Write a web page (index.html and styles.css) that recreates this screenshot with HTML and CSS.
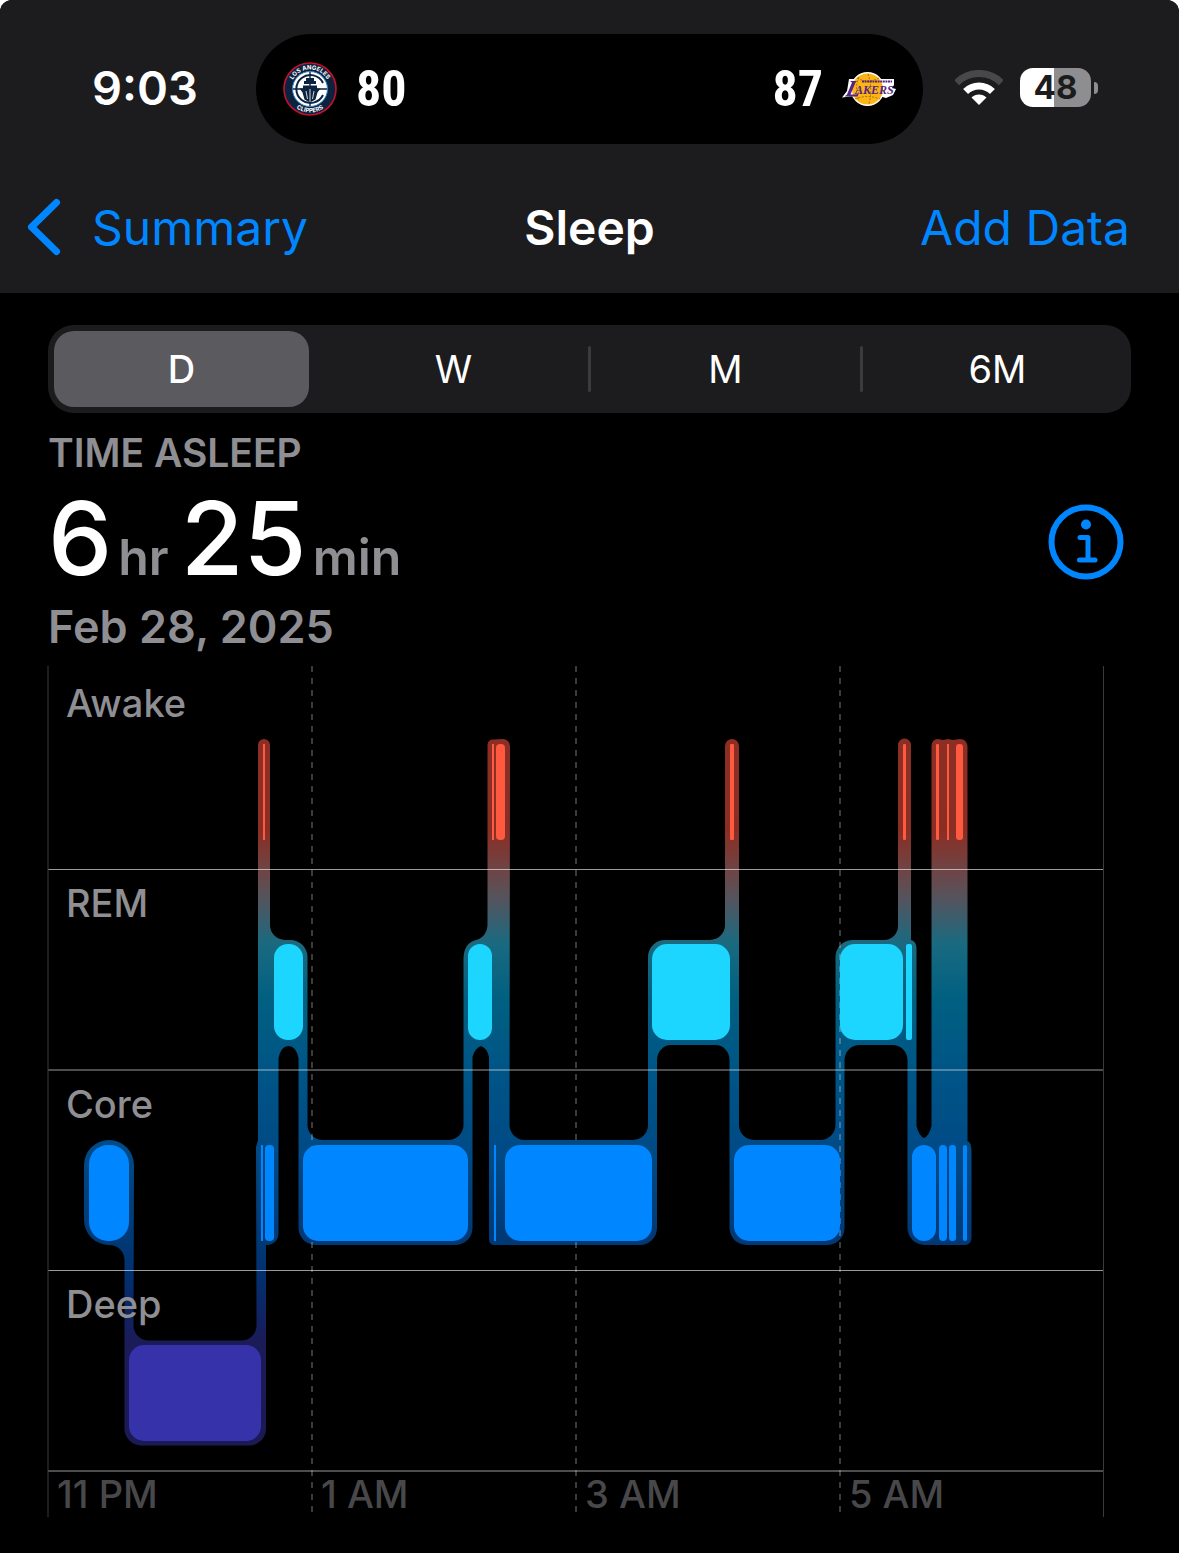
FILE: index.html
```html
<!DOCTYPE html>
<html lang="en">
<head>
  <meta charset="UTF-8" />
  <title>Sleep</title>
  <meta name="viewport" content="width=device-width, initial-scale=1.0" />
  <link rel="stylesheet" href="styles.css">
</head>
<body>
<div class="screen">
  <header class="top">
    <div class="status">
      <time class="clock">9:03</time>

      <!-- live score -->
      <div class="island">
        <svg class="logo" viewBox="0 0 54 54" role="img" aria-label="Los Angeles Clippers">
          <defs>
            <path id="arcTop" d="M7.500 27 A19.500 19.500 0 0 1 46.500 27" />
            <path id="arcBottom" d="M3.500 27 A23.500 23.500 0 0 0 50.500 27" />
          </defs>
          <circle cx="27" cy="27" r="26" fill="#0c2340" stroke="#c8102e" stroke-width="1.6" />
          <circle cx="27" cy="27" r="17.500" fill="#fff" stroke="#2f80c4" stroke-width="1" />
          <path d="M40 21 A14 14 0 1 0 40 33" fill="none" stroke="#0c2340" stroke-width="2" />
          <path d="M10 27 H44 M27 10 V44" stroke="#0c2340" stroke-width="1.4" />
          <path d="M23 16 h8 v3 h2 v3 h-12 v-3 h2z M20 23.500 h14 v3 h3.500 l-3 4 -2 7 -5.500 3 -5.500 -3 -2 -7 -3 -4 h3.500z" fill="#0c2340" />
          <path d="M27 27 V40 M23 29 l1.500 8 M31 29 l-1.500 8" stroke="#fff" stroke-width="0.8" />
          <text class="logo-ring"><textPath href="#arcTop" startOffset="50%">LOS ANGELES</textPath></text>
          <text class="logo-ring"><textPath href="#arcBottom" startOffset="50%">CLIPPERS</textPath></text>
        </svg>
        <span class="score">80</span>
        <span class="score score-away">87</span>
        <svg class="logo" viewBox="0 0 54 36" role="img" aria-label="Los Angeles Lakers">
          <circle cx="25.500" cy="18" r="17" fill="#fff" />
          <path d="M7 8 H52 V14 L50 17 L54 18 L51 24 L44 27 L37 25 H12 L0 26.500 L5 20z" fill="#fff" />
          <circle cx="25.500" cy="18" r="15.500" fill="#fdb515" />
          <path d="M15 7 Q25 13 37 7 M13 28 Q25 23 38 28 M26 3 Q31 17 27 33 M17 6 Q12 18 17 30" fill="none" stroke="#8a5a10" stroke-width="0.8" stroke-dasharray="2 1.500" />
          <path d="M20 10.500 H50" stroke="#552583" stroke-width="2" stroke-dasharray="2 0.600" />
          <path d="M8 10 h7 l-1.500 1.500 -5 12 h6 l3 -3 -2 5 H2.500 l2.500 -2 5 -12z" fill="#552583" />
          <text class="logo-word" x="13" y="23">AKERS</text>
        </svg>
      </div>

      <div class="indicators">
        <svg class="wifi" viewBox="0 0 48 36" role="img" aria-label="Wi-Fi">
          <path d="M1.700 12.700 A31.500 31.500 0 0 1 46.300 12.700" fill="none" stroke="#48484a" stroke-width="7" />
          <path d="M10.600 21.600 A19 19 0 0 1 37.400 21.600" fill="none" stroke="#fff" stroke-width="7" />
          <path d="M16.500 27.500 A10.600 10.600 0 0 1 31.500 27.500 L24 35z" fill="#fff" />
        </svg>
        <span class="battery">48</span>
        <i class="nub"></i>
      </div>
    </div>

    <nav class="nav">
      <a class="back" href="#">
        <svg class="chevron" viewBox="0 0 34 58" aria-hidden="true"><path d="M29.500 4.500 L4.500 29 L29.500 53.500" /></svg>
        Summary
      </a>
      <h1>Sleep</h1>
      <a class="add" href="#">Add Data</a>
    </nav>
  </header>

  <main>
    <div class="range">
      <button class="active">D</button>
      <button>W</button>
      <button>M</button>
      <button>6M</button>
    </div>

    <section class="summary">
      <div>
        <h2>TIME ASLEEP</h2>
        <p class="total"><b>6</b><span>hr</span><b>25</b><span>min</span></p>
        <p class="date">Feb 28, 2025</p>
      </div>
      <button class="info" aria-label="About sleep">
        <svg viewBox="0 0 76 76" aria-hidden="true">
          <circle cx="38" cy="38" r="34.500" fill="none" stroke="#0086ff" stroke-width="6" />
          <circle cx="38" cy="20.500" r="5" fill="#0086ff" />
          <path d="M32 33.500 H40 V56 M31.500 56 H47" />
        </svg>
      </button>
    </section>

    <svg class="chart" viewBox="47 665 1058 852" role="img" aria-label="Sleep stages, 11 PM to 6 AM">
      <defs>
        <linearGradient id="stages" gradientUnits="userSpaceOnUse" x1="0" y1="740" x2="0" y2="1440">
          <stop offset="0" stop-color="#8c2e23" />
          <stop offset="0.130" stop-color="#8a2e24" />
          <stop offset="0.190" stop-color="#6c4648" />
          <stop offset="0.230" stop-color="#51555f" />
          <stop offset="0.290" stop-color="#1a6a80" />
          <stop offset="0.370" stop-color="#006081" />
          <stop offset="0.470" stop-color="#005586" />
          <stop offset="0.590" stop-color="#004a86" />
          <stop offset="0.720" stop-color="#003874" />
          <stop offset="0.780" stop-color="#052c6c" />
          <stop offset="0.860" stop-color="#1b1b58" />
          <stop offset="1" stop-color="#1c1a55" />
        </linearGradient>
      </defs>

      <!-- connector running through all the stages -->
      <path fill="url(#stages)" d="M84 1165 A25 25 0 0 1 134 1165 L133.500 1325 A15 15 0 0 0 149 1340.500
        H241 A15 15 0 0 0 256.500 1325 L256 1147 L258 1140 V745 A6 6 0 0 1 270 745 V925 A15 15 0 0 0 285 940
        H290 A17 17 0 0 1 307.500 957 V1125 A15 15 0 0 0 323 1140
        H448 A15 15 0 0 0 463.500 1125 V958 Q464 943 476 940 A15 15 0 0 0 487.500 925
        V745 Q488 739 494 739.500 L503 739 A7 7 0 0 1 510 746 L509.500 1125 A15 15 0 0 0 525 1140
        H633 A15 15 0 0 0 648 1125 V957 A17 17 0 0 1 665 940 H710 A15 15 0 0 0 725 925
        V746 A7 7 0 0 1 739 746 V1125 A15 15 0 0 0 754 1140
        H820 A15 15 0 0 0 835.500 1125 V957 A17 17 0 0 1 852 940 H884 A14 14 0 0 0 898 926
        V745 A6.500 6.500 0 0 1 911 745 V940 Q916 941 916.500 948 V1126 Q919 1136 924 1138 Q929 1136 931.500 1126
        V746 Q932 739 938 739 L943 740 L948 739 L953 740 L960 739 Q967 739 967.500 747
        V1141 Q971 1142 971.500 1150 V1238 Q971 1245 965 1245
        H925 A17 17 0 0 1 907.500 1228 V1060 A15 15 0 0 0 892 1045 H860 A15 15 0 0 0 844.500 1060
        V1228 A17 17 0 0 1 828 1245 H747 A17 17 0 0 1 729.500 1228 V1060 A14 15 0 0 0 715 1045
        H671 A14 15 0 0 0 657 1060 V1228 A17 17 0 0 1 640 1245 H495 Q489 1245 489 1239
        V1057 Q487 1048 481 1046 Q475 1048 472.500 1057 V1228 A17 17 0 0 1 456 1245
        H316 A17 17 0 0 1 298.500 1228 V1058 Q296 1046 288.500 1046 Q281 1046 278.500 1058
        V1234 A11 11 0 0 1 268 1245 H266 V1428 A17 17 0 0 1 249 1445.500
        H142 A17 17 0 0 1 124.500 1428 V1260 A15 15 0 0 0 109 1245 A25 25 0 0 1 84 1220z" />

      <g class="hours">
        <path d="M312 666 V1517 M576 666 V1517 M840 666 V1517" stroke-dasharray="6 6" />
      </g>

      <g class="awake">
        <rect x="263" y="744" width="2" height="96" />
        <rect x="492" y="744" width="2" height="96" />
        <rect x="496" y="744" width="9" height="96" rx="4" />
        <rect x="730" y="744" width="4" height="96" rx="1" />
        <rect x="903" y="744" width="3" height="96" rx="1" />
        <rect x="936" y="744" width="3" height="96" rx="1" />
        <rect x="947" y="744" width="2" height="96" />
        <rect x="956" y="744" width="7" height="96" rx="3" />
      </g>
      <g class="rem">
        <rect x="274" y="944" width="29" height="96" rx="14" />
        <rect x="468" y="944" width="24" height="96" rx="12" />
        <rect x="652" y="944" width="78" height="96" rx="15" />
        <rect x="840" y="944" width="63" height="96" rx="15" />
        <rect x="906" y="944" width="6" height="96" rx="2" />
      </g>
      <g class="core">
        <rect x="89" y="1145" width="40" height="96" rx="19" />
        <rect x="261" y="1145" width="2" height="96" />
        <rect x="265" y="1145" width="9" height="96" rx="4" />
        <rect x="303" y="1145" width="165" height="96" rx="15" />
        <rect x="494" y="1145" width="2" height="96" />
        <rect x="505" y="1145" width="147" height="96" rx="15" />
        <rect x="734" y="1145" width="106" height="96" rx="15" />
        <rect x="912" y="1145" width="24" height="96" rx="12" />
        <rect x="939" y="1145" width="8" height="96" rx="4" />
        <rect x="949" y="1145" width="7" height="96" rx="3" />
        <rect x="963" y="1145" width="4" height="96" rx="2" />
      </g>
      <g class="deep">
        <rect x="129" y="1345" width="132" height="96" rx="15" />
      </g>

      <g class="lines">
        <path d="M48 869.500 H1104 M48 1270.500 H1104" />
        <path class="soft" d="M48 1070 H1104 M48 1471 H1104" />
        <path class="edge" d="M48 666 V1517 M1103.500 666 V1517" />
      </g>

      <g class="stage-names">
        <text x="66" y="717">Awake</text>
        <text x="66" y="917">REM</text>
        <text x="66" y="1118">Core</text>
        <text x="66" y="1318">Deep</text>
      </g>
      <g class="hour-names">
        <text x="57" y="1508">11 PM</text>
        <text x="321" y="1508">1 AM</text>
        <text x="585" y="1508">3 AM</text>
        <text x="849" y="1508">5 AM</text>
      </g>
    </svg>
  </main>
</div>
</body>
</html>
```

FILE: styles.css
```css
* {
  box-sizing: border-box;
}
body {
  margin: 0;
  background: #fff;
  font-family: Inter, "Liberation Sans", sans-serif;
}
h1, h2, p {
  margin: 0;
}
a {
  color: #0086ff;
  text-decoration: none;
}
button {
  border: none;
  background: none;
  padding: 0;
  color: #fff;
  font-family: inherit;
  cursor: pointer;
}
.screen {
  min-height: 100vh;
  background: #000;
  color: #fff;
  border-radius: 12px 12px 0 0;
  overflow: hidden;
}

/* status bar */
.top {
  background: #1c1c1e;
  padding-top: 34px;
}
.status {
  display: grid;
  grid-template-columns: 1fr 667px 1fr;
  align-items: center;
}
.clock {
  padding: 0 0 3px 92px;
  font-size: 47px;
  font-weight: 600;
}
.island {
  display: flex;
  align-items: center;
  gap: 19px;
  height: 110px;
  padding: 0 27px;
  background: #000;
  border-radius: 55px;
}
.logo {
  width: 54px;
}
.logo-ring {
  fill: #fff;
  font-size: 6px;
  font-weight: 700;
  text-anchor: middle;
}
.logo-word {
  fill: #552583;
  font-family: "Liberation Serif", serif;
  font-size: 12px;
  font-weight: 700;
  font-style: italic;
}
.score {
  font-family: "Liberation Sans Narrow", "Roboto Condensed", Roboto, sans-serif;
  font-size: 50px;
  font-weight: 700;
}
.score-away {
  margin-left: auto;
}
.indicators {
  display: flex;
  align-items: center;
  padding: 0 0 3px 32px;
}
.wifi {
  width: 48px;
}
.battery {
  width: 71px;
  margin-left: 17px;
  border-radius: 13px;
  background: linear-gradient(90deg, #fff 34px, #8e8e90 34px);
  color: #1c1c1e;
  font-size: 33px;
  font-weight: 700;
  line-height: 39px;
  text-align: center;
}
.nub {
  width: 4px;
  height: 12px;
  margin-left: 3px;
  border-radius: 0 4px 4px 0;
  background: #8e8e90;
}

/* title bar */
.nav {
  display: grid;
  grid-template-columns: 1fr auto 1fr;
  align-items: center;
  height: 132px;
  margin-top: 17px;
  padding: 0 27px;
  font-size: 48px;
}
.nav h1 {
  font-size: 48px;
  font-weight: 600;
}
.back {
  display: flex;
  align-items: center;
  gap: 31px;
}
.chevron {
  width: 34px;
}
.chevron path {
  fill: none;
  stroke: #0086ff;
  stroke-width: 7;
  stroke-linecap: round;
  stroke-linejoin: round;
}
.add {
  padding-right: 22px;
  text-align: right;
}

main {
  padding: 32px 48px 36px;
}

/* D / W / M / 6M */
.range {
  display: grid;
  grid-template-columns: repeat(4, 1fr);
  gap: 17px;
  padding: 6px;
  background: #1c1c1e;
  border-radius: 26px;
}
.range button {
  position: relative;
  height: 76px;
  border-radius: 20px;
  font-size: 38px;
  font-weight: 400;
}
.range .active {
  background: #5b5a5f;
  font-weight: 500;
}
.range button:nth-child(n+3)::before {
  content: "";
  position: absolute;
  left: -10px;
  top: 15px;
  width: 3px;
  height: 46px;
  border-radius: 2px;
  background: #3b3b3e;
}

.summary {
  display: flex;
  justify-content: space-between;
  align-items: center;
  margin-top: 16px;
  color: #8e8e93;
  font-weight: 600;
}
.summary h2 {
  font-size: 39px;
  font-weight: 600;
  line-height: 48px;
}
.total {
  display: flex;
  align-items: baseline;
  gap: 6px;
  margin: 13px 0;
  font-size: 50px;
  line-height: 52px;
}
.total b {
  color: #fff;
  font-size: 102px;
  font-weight: 500;
  line-height: 96px;
}
.total span {
  margin-right: 6px;
}
.date {
  font-size: 45px;
  line-height: 55px;
}
.info {
  width: 76px;
  height: 76px;
  margin-right: 7px;
}
.info path {
  fill: none;
  stroke: #0086ff;
  stroke-width: 5;
  stroke-linecap: round;
  stroke-linejoin: round;
}

/* chart */
.chart {
  display: block;
  width: calc(100% - 25px);
  margin: 11px 0 0 -1px;
}
.hours path {
  fill: none;
  stroke: rgba(255, 255, 255, 0.23);
  stroke-width: 2;
}
.awake {
  fill: #ff5940;
}
.rem {
  fill: #1cd6ff;
}
.core {
  fill: #0086ff;
}
.deep {
  fill: #3633aa;
}
.lines path {
  stroke: rgba(255, 255, 255, 0.6);
  stroke-width: 1;
}
.lines .soft {
  stroke: rgba(255, 255, 255, 0.3);
  stroke-width: 2;
}
.lines .edge {
  stroke: #3a3a3c;
}
.chart text {
  font-size: 38px;
  font-weight: 500;
}
.stage-names {
  fill: #8e8e93;
}
.hour-names {
  fill: #48484a;
}
```
